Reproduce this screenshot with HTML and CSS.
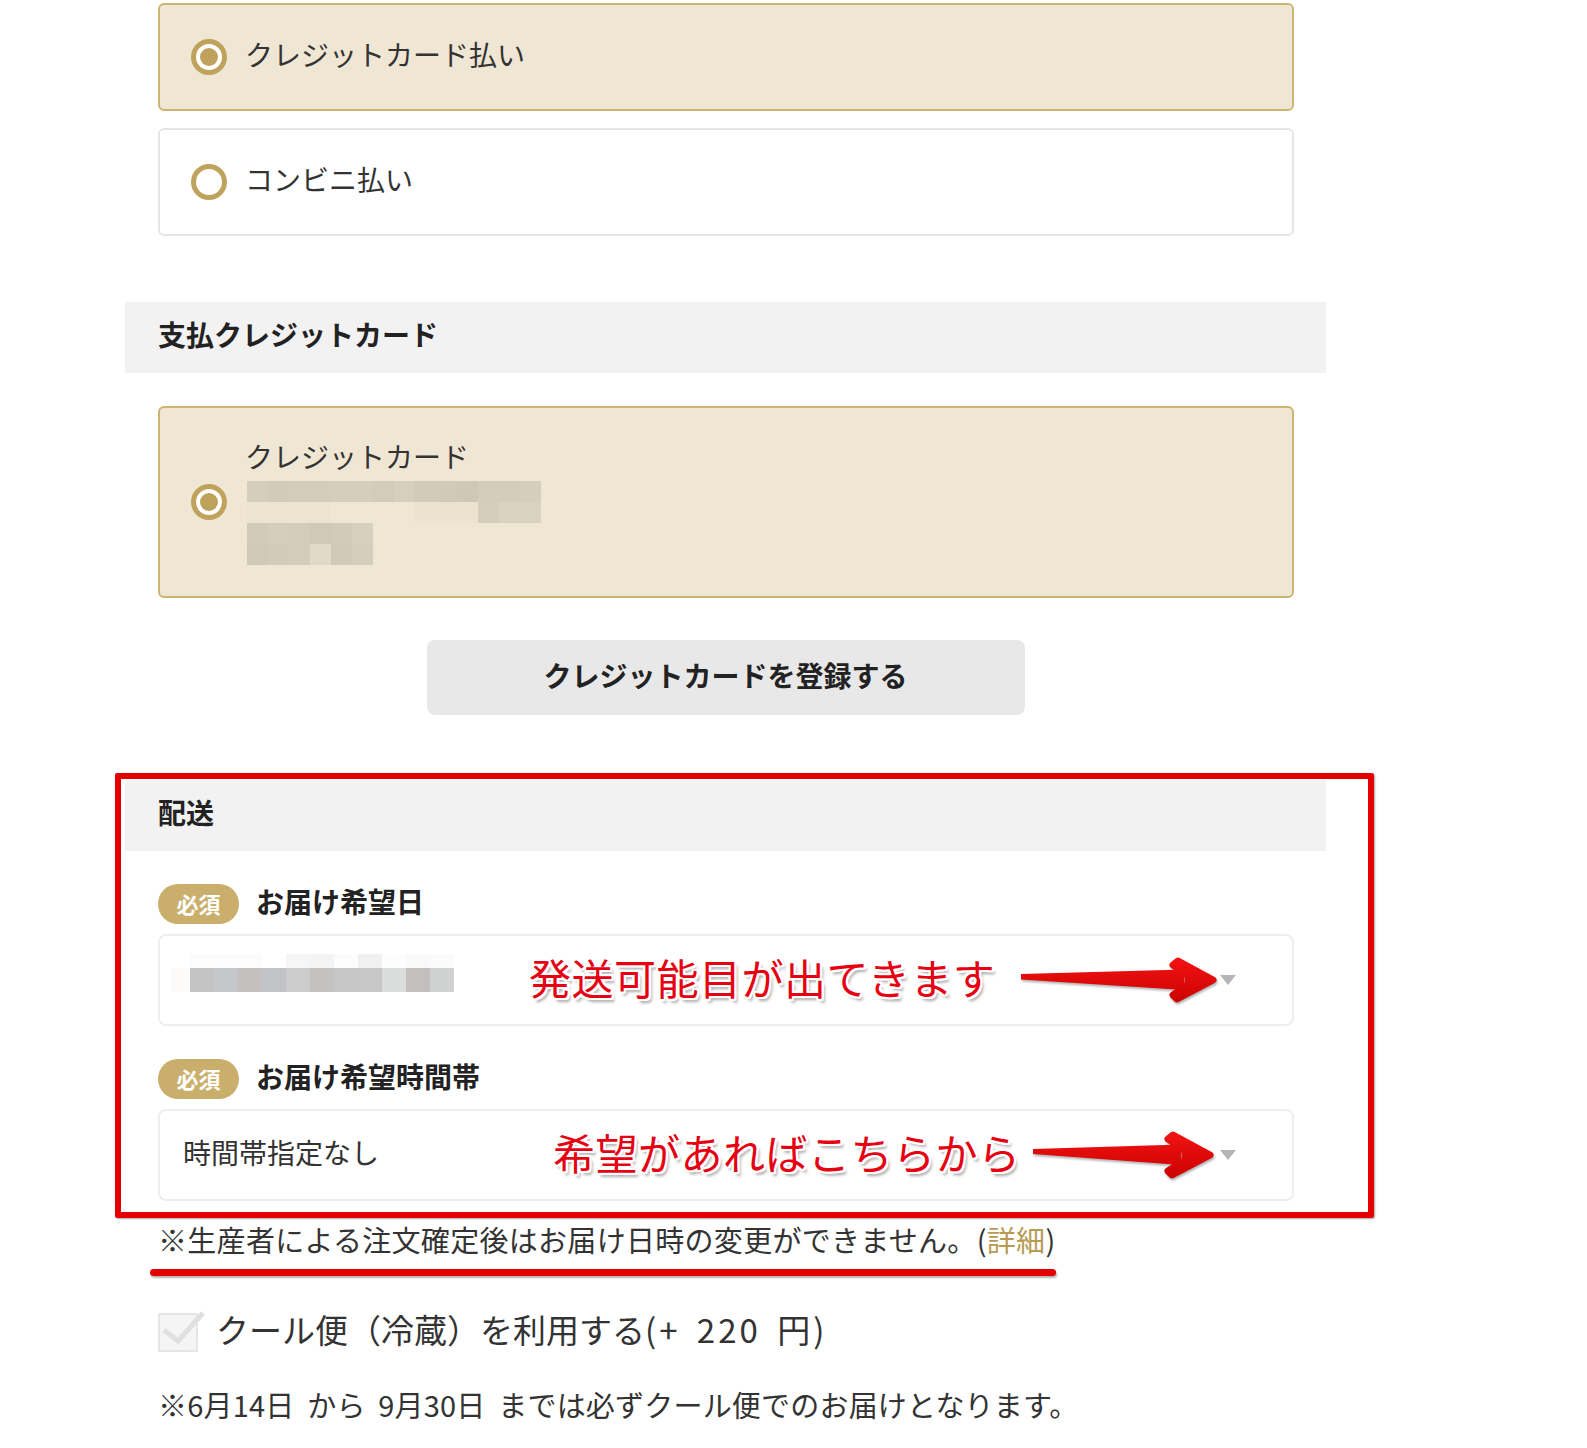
FILE: index.html
```html
<!DOCTYPE html>
<html lang="ja">
<head>
  <meta charset="UTF-8" />
  <title>お支払い・配送</title>
  <link rel="stylesheet" href="styles.css">
</head>
<body>
  <div class="page">
    <!-- 支払方法 -->
    <div class="options">
      <label class="option selected">
        <span class="radio on"></span>
        <span class="option-text">クレジットカード払い</span>
      </label>
      <label class="option">
        <span class="radio"></span>
        <span class="option-text">コンビニ払い</span>
      </label>
    </div>

    <!-- 支払クレジットカード -->
    <h2 class="band band-card">支払クレジットカード</h2>
    <div class="options">
      <label class="option selected card-option">
        <span class="radio on"></span>
        <span class="card-info">
          <span class="card-title">クレジットカード</span>
          <span class="pix pix-a"></span>
          <span class="pix pix-b"></span>
          <span class="pix pix-c"></span>
          <span class="pix pix-d"></span>
        </span>
      </label>
    </div>
    <button class="register">クレジットカードを登録する</button>

    <!-- 配送 -->
    <div class="delivery">
      <div class="red-box"></div>
      <h2 class="band">配送</h2>
      <div class="fields">
        <div class="field-head">
          <span class="badge">必須</span>
          <span class="field-label">お届け希望日</span>
        </div>
        <div class="select">
          <span class="blur-date">
            <span class="pix pix-e"></span>
            <span class="pix pix-f"></span>
          </span>
          <span class="caret"></span>
          <span class="callout callout-date">発送可能目が出てきます</span>
          <svg class="arrow arrow-date" width="204" height="50" viewBox="0 0 204 50">
            <defs>
              <linearGradient id="red1" gradientUnits="userSpaceOnUse" x1="0" y1="0" x2="0" y2="50">
                <stop offset="0" stop-color="#f51414" />
                <stop offset="1" stop-color="#c90000" />
              </linearGradient>
            </defs>
            <path d="M3 19 L166 14.5 L166 35 L3 24.5 Z" fill="url(#red1)" />
            <path d="M195 25 L160 6 L155 10 L170 21 L170 29 L155 40 L159 44 Z" fill="url(#red1)" stroke="url(#red1)" stroke-width="7" stroke-linejoin="round" />
          </svg>
        </div>

        <div class="field-head">
          <span class="badge">必須</span>
          <span class="field-label">お届け希望時間帯</span>
        </div>
        <div class="select">
          <span class="select-text">時間帯指定なし</span>
          <span class="caret"></span>
          <span class="callout callout-time">希望があればこちらから</span>
          <svg class="arrow arrow-time" width="190" height="52" viewBox="0 0 190 52">
            <defs>
              <linearGradient id="red2" gradientUnits="userSpaceOnUse" x1="0" y1="0" x2="0" y2="52">
                <stop offset="0" stop-color="#f51414" />
                <stop offset="1" stop-color="#c90000" />
              </linearGradient>
            </defs>
            <path d="M3 20 L151 15.5 L151 36 L3 25 Z" fill="url(#red2)" />
            <path d="M180 26 L143 6 L138 10 L155 22 L155 31 L138 42 L142 46 Z" fill="url(#red2)" stroke="url(#red2)" stroke-width="7" stroke-linejoin="round" />
          </svg>
        </div>
      </div>
    </div>

    <p class="note">※生産者による注文確定後はお届け日時の変更ができません。(<a href="#">詳細</a>)<span class="red-line"></span></p>

    <label class="cool">
      <svg class="check" width="48" height="42" viewBox="0 0 48 42">
        <rect x="1" y="3" width="38" height="37" fill="#f5f5f5" stroke="#e6e6e6" stroke-width="2" />
        <polyline points="6,19 20,30 45,2" fill="none" stroke="#e0e0e0" stroke-width="5" />
      </svg>
      <span class="cool-text">クール便（冷蔵）を利用する<span class="price">(+ 220 円)</span></span>
    </label>

    <p class="season">※6月14日 から 9月30日 までは必ずクール便でのお届けとなります。</p>
  </div>
</body>
</html>
```

FILE: styles.css
```css
body {
  margin: 0;
  font-family: "Noto Sans CJK JP", "Noto Sans", sans-serif;
  color: #333;
  background: #fff;
}
.page {
  width: 1201px;
  margin-left: 125px;
  padding-top: 3px;
  padding-bottom: 40px;
}
.options {
  display: flex;
  flex-direction: column;
  gap: 17px;
  padding: 0 32px 0 33px;
}
.option {
  display: flex;
  align-items: center;
  gap: 18px;
  height: 108px;
  box-sizing: border-box;
  padding-left: 31px;
  border: 2px solid #e6e6e6;
  border-radius: 6px;
  font-size: 28px;
  color: #333;
}
.option-text {
  margin-bottom: 6px;
}
.option.selected {
  background: #f0e6d4;
  border-color: #ccb472;
}
.radio {
  width: 36px;
  height: 36px;
  box-sizing: border-box;
  border: 5px solid #bfa35c;
  border-radius: 50%;
  background: #fff;
  flex-shrink: 0;
  display: grid;
  place-items: center;
}
.radio.on::after {
  content: "";
  width: 18px;
  height: 18px;
  border-radius: 50%;
  background: #bea25b;
}
.band {
  margin: 0;
  height: 71px;
  box-sizing: border-box;
  display: flex;
  align-items: center;
  padding: 0 0 7px 33px;
  background: #f2f2f2;
  font-size: 28px;
  font-weight: bold;
  color: #222;
}
.band-card {
  margin-top: 66px;
  margin-bottom: 33px;
}
.card-option {
  height: 192px;
}
.card-info {
  display: flex;
  flex-direction: column;
}
.card-title {
  line-height: 40px;
  margin-top: -3px;
  margin-bottom: 5px;
}
.pix {
  display: block;
  height: 21px;
  margin-left: 2px;
}
.pix-a {
  width: 294px;
  background: linear-gradient(90deg, #d6cebd 0 21px, #d3cbba 21px 42px, #d4ccbb 42px 63px, #d5cdbc 63px 84px, #d6cebd 84px 105px, #d6cebd 105px 126px, #d4ccbb 126px 147px, #d7cfbe 147px 168px, #d3cbba 168px 189px, #d2cab9 189px 210px, #d0c8b7 210px 231px, #d5cdbc 231px 252px, #d4ccbb 252px 273px, #d6cebd 273px 294px);
}
.pix-b {
  width: 294px;
  background: linear-gradient(90deg, #ece3d1 0 84px, #efe6d4 84px 168px, #ebe2d0 168px 231px, #d6cebd 231px 252px, #dad2c1 252px 294px);
}
.pix-c {
  width: 126px;
  background: linear-gradient(90deg, #d3cbba 0 21px, #d6cebd 21px 42px, #d4ccbb 42px 63px, #d1c9b8 63px 84px, #d3cbba 84px 105px, #d8d0bf 105px 126px);
}
.pix-d {
  width: 126px;
  background: linear-gradient(90deg, #d1c9b8 0 21px, #d3cbba 21px 42px, #d5cdbc 42px 63px, #e2dac9 63px 84px, #d2cab9 84px 105px, #d6cebd 105px 126px);
}
.register {
  display: block;
  width: 598px;
  height: 75px;
  margin: 42px auto 0;
  padding: 0 0 6px;
  border: none;
  border-radius: 8px;
  background: #e8e8e8;
  font-family: inherit;
  font-size: 28px;
  font-weight: bold;
  color: #222;
  cursor: pointer;
}
.delivery {
  position: relative;
  margin-top: 65px;
}
.red-box {
  position: absolute;
  left: -10px;
  top: -7px;
  right: -48px;
  bottom: -17px;
  border: 6px solid #e40000;
  border-radius: 2px;
  box-shadow: 1px 1px 2px rgba(0, 0, 0, 0.35);
  z-index: 2;
  pointer-events: none;
}
.fields {
  padding: 0 32px 0 33px;
}
.field-head {
  display: flex;
  align-items: center;
  gap: 17px;
  height: 40px;
  margin-top: 33px;
  margin-bottom: 10px;
}
.badge {
  width: 81px;
  height: 40px;
  box-sizing: border-box;
  padding-bottom: 3px;
  border-radius: 20px;
  background: #c9af6b;
  color: #fff;
  font-size: 22px;
  font-weight: bold;
  display: grid;
  place-items: center;
}
.field-label {
  font-size: 28px;
  line-height: 34px;
  font-weight: bold;
  color: #222;
  margin-bottom: 6px;
}
.select {
  position: relative;
  display: flex;
  align-items: center;
  height: 92px;
  box-sizing: border-box;
  padding: 0 56px 0 23px;
  border: 2px solid #eeeeee;
  border-radius: 8px;
  font-size: 28px;
  color: #333;
}
.select-text {
  margin-bottom: 6px;
}
.caret {
  margin-left: auto;
  width: 0;
  height: 0;
  border-left: 8px solid transparent;
  border-right: 8px solid transparent;
  border-top: 10px solid #b5b5b5;
}
.blur-date {
  display: flex;
  flex-direction: column;
  margin-left: -12px;
  margin-bottom: 14px;
}
.pix-e {
  width: 283px;
  height: 14px;
  margin: 0;
  background: linear-gradient(90deg, #fff 0 19px, #fcfcfc 19px 91px, #fff 91px 115px, #f6f6f6 115px 139px, #f4f4f4 139px 163px, #fcfcfc 163px 187px, #f0f0f0 187px 211px, #fdfdfd 211px 235px, #f9f9f9 235px 259px, #fbfbfb 259px 283px);
}
.pix-f {
  width: 283px;
  height: 24px;
  margin: 0;
  background: linear-gradient(90deg, #fcfbfa 0 19px, #c3c4c3 19px 43px, #c6c7cb 43px 67px, #c3c0bf 67px 91px, #c2c3c6 91px 115px, #cccccc 115px 139px, #c3c2c0 139px 163px, #c7c7c7 163px 187px, #c8c8c8 187px 211px, #dbdddc 211px 235px, #c2bfbe 235px 259px, #d0d2d1 259px 283px);
}
.callout {
  position: absolute;
  top: 15px;
  font-size: 42px;
  line-height: 52px;
  letter-spacing: 0.5px;
  color: #e60012;
  white-space: nowrap;
  text-shadow: 2px 0 0 #fff, -2px 0 0 #fff, 0 2px 0 #fff, 0 -2px 0 #fff, 2px 2px 0 #fff, -2px -2px 0 #fff, 2px -2px 0 #fff, -2px 2px 0 #fff, 3px 4px 3px rgba(0, 0, 0, 0.35);
}
.callout-date {
  left: 369px;
}
.callout-time {
  left: 393px;
}
.arrow {
  position: absolute;
  filter: drop-shadow(1px 2px 1px rgba(0, 0, 0, 0.3));
}
.arrow-date {
  left: 858px;
  top: 19px;
}
.arrow-time {
  left: 870px;
  top: 18px;
}
.note {
  position: relative;
  margin: 18px 0 0;
  padding-left: 33px;
  font-size: 29px;
  letter-spacing: 0.3px;
  line-height: 40px;
  color: #333;
}
.note a {
  color: #b89b52;
  text-decoration: none;
}
.red-line {
  position: absolute;
  left: 25px;
  top: 50px;
  width: 906px;
  height: 7px;
  border-radius: 4px;
  background: #e40000;
  box-shadow: 1px 2px 2px rgba(0, 0, 0, 0.3);
}
.cool {
  display: flex;
  align-items: center;
  gap: 10px;
  margin-top: 52px;
  padding-left: 33px;
  font-size: 33px;
  color: #333;
}
.cool-text {
  line-height: 36px;
  margin-bottom: 6px;
}
.price {
  letter-spacing: 3px;
  word-spacing: 6px;
}
.check {
  overflow: visible;
  flex-shrink: 0;
}
.season {
  margin: 31px 0 0;
  padding-left: 33px;
  font-size: 29px;
  line-height: 40px;
  word-spacing: 6px;
  letter-spacing: 0.2px;
  color: #333;
}
```
